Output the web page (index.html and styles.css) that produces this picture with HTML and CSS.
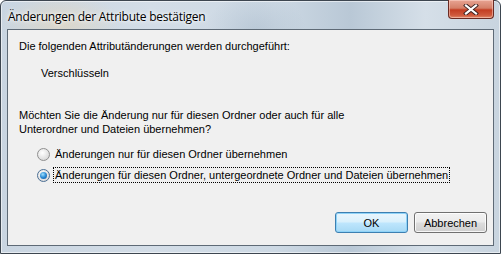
FILE: index.html
```html
<!DOCTYPE html>
<html lang="de">
<head>
<meta charset="UTF-8">
<title>Änderungen der Attribute bestätigen</title>
<link rel="stylesheet" href="styles.css">
</head>
<body>
<div class="window">
  <div class="titlebar">
    <span class="title">Änderungen der Attribute bestätigen</span>
    <span class="close-btn">
      <svg width="16" height="11" viewBox="0 0 16 11">
        <path d="M3 1.5 L13 9.5 M13 1.5 L3 9.5" stroke="#3a2020" stroke-width="4" stroke-linecap="square"/>
        <path d="M3 1.5 L13 9.5 M13 1.5 L3 9.5" stroke="#ffffff" stroke-width="2.2" stroke-linecap="square"/>
      </svg>
    </span>
  </div>
  <div class="client">
    <p class="line">Die folgenden Attributänderungen werden durchgeführt:</p>
    <p class="line attr">Verschlüsseln</p>
    <p class="line question">Möchten Sie die Änderung nur für diesen Ordner oder auch für alle<br>Unterordner und Dateien übernehmen?</p>
    <div class="options">
      <label class="option"><span class="radio"></span><span class="option-text">Änderungen nur für diesen Ordner übernehmen</span></label>
      <label class="option"><span class="radio checked"></span><span class="option-text focused">Änderungen für diesen Ordner, untergeordnete Ordner und Dateien übernehmen</span></label>
    </div>
    <div class="buttons">
      <span class="btn default">OK</span>
      <span class="btn">Abbrechen</span>
    </div>
  </div>
</div>
</body>
</html>
```

FILE: styles.css
```css
/* Windows 7 style confirmation dialog */
body {
  margin: 0;
  font-family: "Liberation Sans", Arial, sans-serif;
}
.window {
  width: 501px;
  height: 254px;
  box-sizing: border-box;
  border: 1px solid #3d4650;
  border-radius: 6px 6px 0 0;
  padding: 0 6px 7px 6px;
  display: flex;
  flex-direction: column;
  background:
    radial-gradient(ellipse 60px 30px at 60px 22px, rgba(226, 214, 190, 0.7), transparent),
    radial-gradient(ellipse 50px 40px at 255px 30px, rgba(150, 170, 190, 0.35), transparent),
    linear-gradient(to right, #c9d5e1 0%, #d3dde7 30%, #cdd9e4 55%, #b9c8d6 70%, #d5dfe8 85%, #c8d4df 100%);
  box-shadow: inset 0 0 0 1px rgba(255, 255, 255, 0.55);
}
.titlebar {
  height: 28px;
  display: flex;
  justify-content: space-between;
  align-items: flex-start;
}
.title {
  font-family: "Open Sans", "Liberation Sans", sans-serif;
  font-size: 12px;
  color: #000;
  margin: 7px 0 0 1px;
  text-shadow: 0 0 6px #fff, 0 0 3px #fff;
  letter-spacing: -0.25px;
}
.close-btn {
  width: 46px;
  height: 19px;
  margin-top: -1px;
  box-sizing: border-box;
  border: 1px solid #6a2a22;
  border-top: none;
  border-radius: 0 0 4px 4px;
  background: linear-gradient(to bottom, #e8a493 0%, #d47f68 45%, #c33d22 55%, #cf5a3d 85%, #e08a6a 100%);
  box-shadow: inset 0 0 0 1px rgba(255, 220, 210, 0.5);
  display: flex;
  justify-content: center;
  align-items: center;
}
.client {
  flex: 1;
  border: 1px solid #5e6a76;
  background: #f0f0f0;
  padding: 10px 11px 12px 11px;
  display: flex;
  flex-direction: column;
  font-size: 11px;
  color: #000;
}
.line {
  margin: 0;
  line-height: 13px;
}
.attr {
  margin: 14px 0 0 22px;
}
.question {
  margin-top: 28px;
  line-height: 14px;
}
.options {
  margin-top: 10px;
  display: flex;
  flex-direction: column;
  gap: 5px;
}
.option {
  display: flex;
  align-items: center;
  height: 16px;
  padding-left: 18px;
}
.radio {
  width: 11px;
  height: 11px;
  border-radius: 50%;
  border: 1px solid #8f8f8f;
  background: radial-gradient(circle at 40% 35%, #ffffff 0%, #e4e4e4 55%, #cfcfcf 100%);
  margin-right: 3px;
  position: relative;
}
.radio.checked {
  border-color: #4b6f94;
}
.radio.checked::after {
  content: "";
  position: absolute;
  left: 2px;
  top: 2px;
  width: 7px;
  height: 7px;
  border-radius: 50%;
  background: radial-gradient(circle at 40% 35%, #9fe0ff 0%, #2a8ad4 50%, #0b4f9a 100%);
}
.option-text {
  padding: 1px 1px;
  border: 1px dotted transparent;
}
.option-text.focused {
  border-color: #000;
}
.buttons {
  margin-top: auto;
  display: flex;
  justify-content: flex-end;
  gap: 6px;
  margin-right: -5px;
}
.btn {
  width: 73px;
  height: 21px;
  box-sizing: border-box;
  border: 1px solid #707070;
  border-radius: 3px;
  background: linear-gradient(to bottom, #f2f2f2 0%, #ebebeb 48%, #dddddd 52%, #cfcfcf 100%);
  display: flex;
  justify-content: center;
  align-items: center;
  box-shadow: inset 0 0 0 1px rgba(255, 255, 255, 0.8);
}
.btn.default {
  border-color: #3c7fb1;
  background: linear-gradient(to bottom, #eaf6fd 0%, #d9f0fc 48%, #bee6fd 52%, #a7d9f5 100%);
  box-shadow: inset 0 0 0 1px #8fd3f8;
}
```
